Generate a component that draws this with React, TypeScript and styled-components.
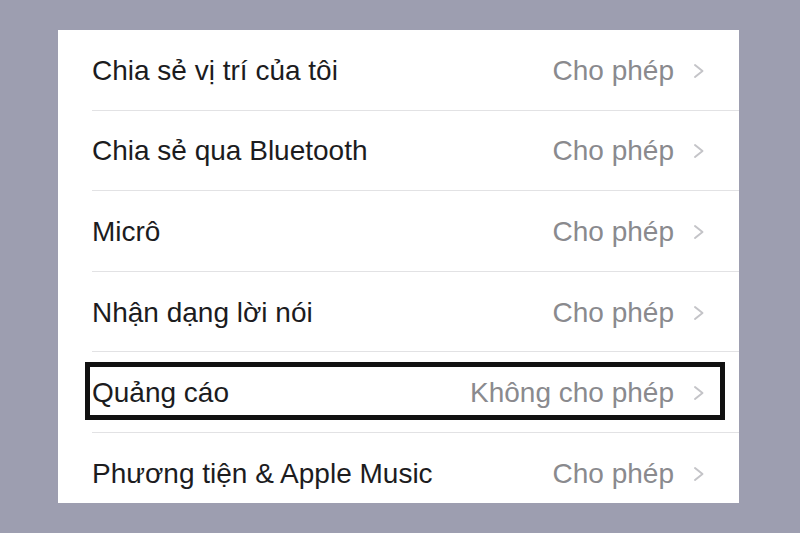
import styled, { createGlobalStyle } from "styled-components";

const GlobalStyle = createGlobalStyle`
  html, body {
    margin: 0;
    padding: 0;
    background: #9d9eb0;
  }
  body {
    width: 800px;
    height: 533px;
    overflow: hidden;
    font-family: "Liberation Sans", Arial, sans-serif;
  }
`;

const Stage = styled.div`
  padding: 30px 0 0 58px;
`;

const Panel = styled.div`
  width: 681px;
  height: 473px;
  background: #ffffff;
  overflow: hidden;
`;

const Row = styled.div`
  padding-left: 34px;
`;

const RowInner = styled.div<{ $highlighted?: boolean }>`
  position: relative;
  box-sizing: border-box;
  display: flex;
  align-items: center;
  height: 80.6px;
  padding: 2px 34px 0 0;
  border-bottom: 1px solid #e2e2e4;

  ${({ $highlighted }) =>
    $highlighted &&
    `
    &::after {
      content: "";
      position: absolute;
      top: 10px;
      bottom: 12px;
      left: -7px;
      right: 14px;
      border: 5px solid #111111;
    }
  `}
`;

const Label = styled.span`
  flex: 1;
  font-size: 28px;
  color: #1c1c1e;
  white-space: nowrap;
`;

const Value = styled.span`
  font-size: 28px;
  color: #8a8a8e;
  white-space: nowrap;
`;

const Chevron = styled.svg`
  margin-left: 19px;
  width: 12px;
  height: 16px;
  flex-shrink: 0;
`;

const ChevronIcon = () => (
  <Chevron viewBox="0 0 12 16">
    <path
      d="M2 2 L9.5 8 L2 14"
      fill="none"
      stroke="#c4c4c8"
      strokeWidth="2"
      strokeLinecap="round"
      strokeLinejoin="round"
    />
  </Chevron>
);

const rows = [
  { label: "Chia sẻ vị trí của tôi", value: "Cho phép" },
  { label: "Chia sẻ qua Bluetooth", value: "Cho phép" },
  { label: "Micrô", value: "Cho phép" },
  { label: "Nhận dạng lời nói", value: "Cho phép" },
  { label: "Quảng cáo", value: "Không cho phép", highlighted: true },
  { label: "Phương tiện & Apple Music", value: "Cho phép" },
];

const App = () => (
  <>
    <GlobalStyle />
    <Stage>
      <Panel>
        {rows.map((row) => (
          <Row key={row.label}>
            <RowInner $highlighted={row.highlighted}>
              <Label>{row.label}</Label>
              <Value>{row.value}</Value>
              <ChevronIcon />
            </RowInner>
          </Row>
        ))}
      </Panel>
    </Stage>
  </>
);

export default App;
